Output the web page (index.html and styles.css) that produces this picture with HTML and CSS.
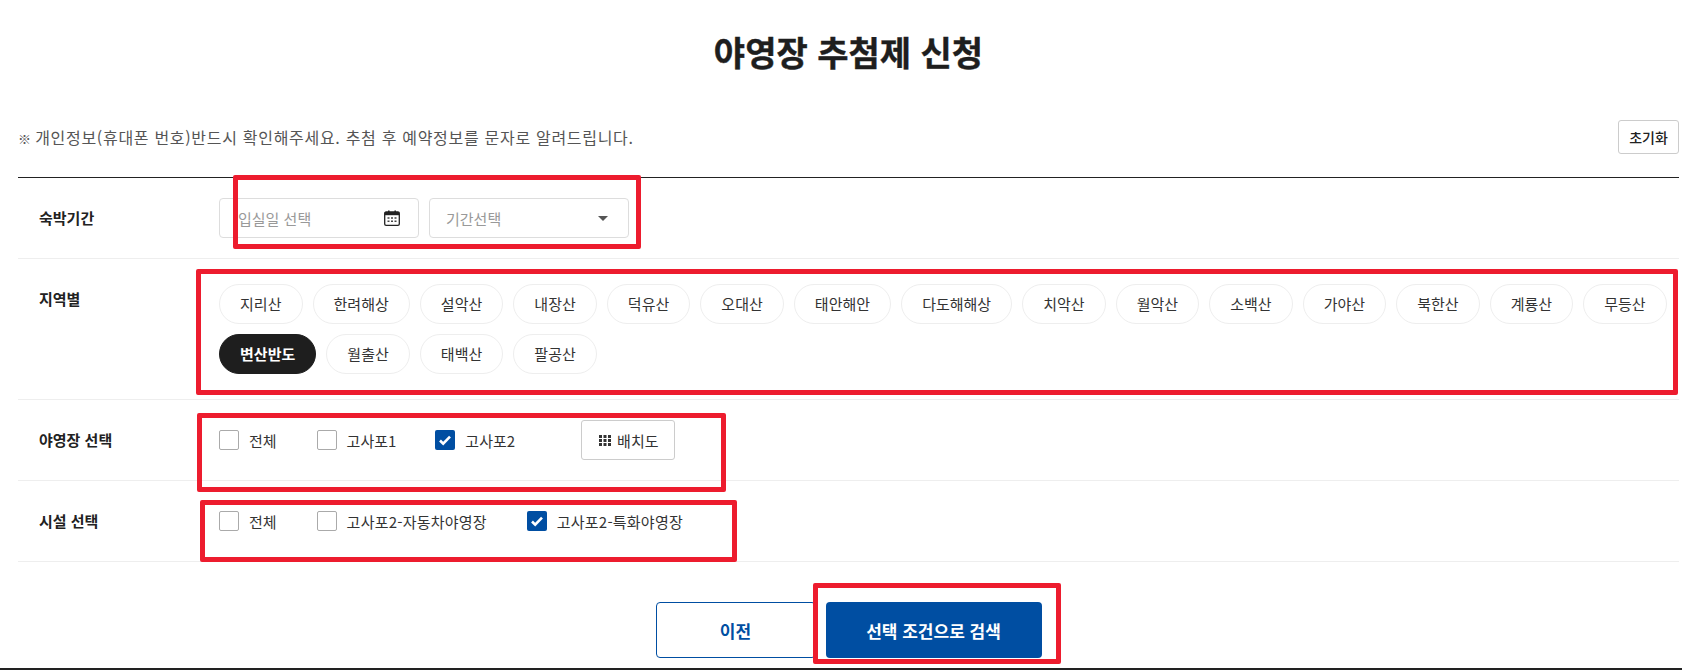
FILE: index.html
```html
<!DOCTYPE html>
<html lang="ko">
<head>
<meta charset="utf-8">
<title>야영장 추첨제 신청</title>
<link rel="stylesheet" href="styles.css">
</head>
<body>
<main class="page">
  <h1 class="title">야영장 추첨제 신청</h1>
  <div class="notice-bar">
    <p class="notice"><span class="refmark">※</span> 개인정보(휴대폰 번호)반드시 확인해주세요. 추첨 후 예약정보를 문자로 알려드립니다.</p>
    <button class="reset" type="button">초기화</button>
  </div>
  <section class="form">
    <div class="row">
      <div class="label">숙박기간</div>
      <div class="value inline">
        <div class="field">
          <span class="placeholder date-ph">입실일 선택</span>
          <svg class="cal" width="16" height="16" viewBox="0 0 16 16" aria-hidden="true">
            <path d="M4 0.5h1.6v2H4zM10.4 0.5H12v2h-1.6z" fill="#222"/>
            <rect x="0.7" y="2" width="14.6" height="13.3" rx="1.4" fill="none" stroke="#222" stroke-width="1.3"/>
            <rect x="0.7" y="2" width="14.6" height="3.2" fill="#222"/>
            <path d="M3.5 7.2h2v1.6h-2zM7 7.2h2v1.6h-2zM10.5 7.2h2v1.6h-2zM3.5 10.4h2V12h-2zM7 10.4h2V12H7zM10.5 10.4h2V12h-2z" fill="#444"/>
          </svg>
        </div>
        <div class="field select">
          <span class="placeholder">기간선택</span>
          <span class="caret"></span>
        </div>
      </div>
    </div>
    <div class="row">
      <div class="label">지역별</div>
      <div class="value chips">
        <span class="chip">지리산</span><span class="chip">한려해상</span><span class="chip">설악산</span><span class="chip">내장산</span><span class="chip">덕유산</span><span class="chip">오대산</span><span class="chip">태안해안</span><span class="chip">다도해해상</span><span class="chip">치악산</span><span class="chip">월악산</span><span class="chip">소백산</span><span class="chip">가야산</span><span class="chip">북한산</span><span class="chip">계룡산</span><span class="chip">무등산</span><span class="chip active">변산반도</span><span class="chip">월출산</span><span class="chip">태백산</span><span class="chip">팔공산</span>
      </div>
    </div>
    <div class="row">
      <div class="label">야영장 선택</div>
      <div class="value inline">
        <span class="check"><span class="box"></span>전체</span>
        <span class="check tight"><span class="box"></span>고사포1</span>
        <span class="check"><span class="box on"><svg width="20" height="20" viewBox="0 0 20 20" aria-hidden="true"><path d="M5 10.500l3.200 3.200 6.800-7" fill="none" stroke="#fff" stroke-width="2.600"/></svg></span>고사포2</span>
        <button class="map-btn" type="button">
          <svg width="12" height="11" viewBox="0 0 12 11" aria-hidden="true"><path d="M0 0h3v3H0zM4.500 0h3v3h-3zM9 0h3v3H9zM0 4h3v3H0zM4.500 4h3v3h-3zM9 4h3v3H9zM0 8h3v3H0zM4.500 8h3v3h-3zM9 8h3v3H9z" fill="#333"/></svg>
          배치도
        </button>
      </div>
    </div>
    <div class="row">
      <div class="label">시설 선택</div>
      <div class="value inline">
        <span class="check"><span class="box"></span>전체</span>
        <span class="check wide"><span class="box"></span>고사포2-자동차야영장</span>
        <span class="check wide"><span class="box on"><svg width="20" height="20" viewBox="0 0 20 20" aria-hidden="true"><path d="M5 10.500l3.200 3.200 6.800-7" fill="none" stroke="#fff" stroke-width="2.600"/></svg></span>고사포2-특화야영장</span>
      </div>
    </div>
  </section>
  <div class="actions">
    <button class="btn prev" type="button">이전</button>
    <button class="btn search" type="button">선택 조건으로 검색</button>
  </div>
</main>
<div class="mark mark-1"></div>
<div class="mark mark-2"></div>
<div class="mark mark-3"></div>
<div class="mark mark-4"></div>
<div class="mark mark-5"></div>
<div class="foot"></div>
</body>
</html>
```

FILE: styles.css
```css
* { box-sizing: border-box; }
html, body { margin: 0; padding: 0; height: 670px; overflow: hidden; background: #fff; }
body { position: relative; font-family: "Noto Sans CJK KR", "Noto Sans", sans-serif; color: #222; font-size: 15px; }
button { font-family: inherit; cursor: pointer; }
.page { margin: 0 3px 0 18px; }
.title { margin: 0; padding-top: 27px; height: 120px; font-size: 34px; line-height: 50px; font-weight: 700; text-align: center; color: #1e1e1e; -webkit-text-stroke: 0.4px #1e1e1e; }
.notice-bar { display: flex; justify-content: space-between; align-items: flex-start; height: 58px; border-bottom: 1px solid #222; }
.notice { margin: 0; font-size: 16px; letter-spacing: 0.7px; line-height: 34px; color: #555; }
.refmark { display: inline-block; width: 12px; overflow: visible; letter-spacing: 0; font-size: 13px; }
.reset { width: 61px; height: 34px; padding: 0; background: #fff; border: 1px solid #ccc; border-radius: 3px; font-size: 14px; font-weight: 500; color: #222; }
.row { display: grid; grid-template-columns: 201px 1fr; padding: 20px 0; border-bottom: 1px solid #eee; }
.label { padding-left: 21px; line-height: 40px; font-size: 15px; font-weight: 700; color: #222; }
.value { min-width: 0; }
.inline { display: flex; align-items: center; height: 40px; }
.field { position: relative; display: flex; align-items: center; justify-content: space-between; width: 200px; height: 40px; margin-right: 10px; padding: 0 19px; border: 1px solid #ddd; border-radius: 4px; background: #fff; }
.select { padding: 0 20px 0 16px; }
.placeholder { color: #999; }
.date-ph { margin-left: -1px; }
.cal { flex: none; margin-right: -1px; }
.caret { width: 0; height: 0; border-left: 5.5px solid transparent; border-right: 5.5px solid transparent; border-top: 5.5px solid #555; }
.chips { display: flex; flex-wrap: wrap; gap: 10px; padding: 5px 0; }
.chip { height: 40px; padding: 0 20.05px; line-height: 38px; border: 1px solid #eee; border-radius: 20px; color: #333; background: #fff; }
.chip.active { background: #1e1e1e; border-color: #1e1e1e; color: #fff; font-weight: 700; }
.check { display: inline-flex; align-items: center; margin-right: 40px; color: #333; }
.check.tight { margin-right: 39px; }
.check.wide { letter-spacing: 0.22px; }
.box { flex: none; width: 20px; height: 20px; margin-right: 10px; border: 1px solid #aaa; border-radius: 2px; background: #fff; }
.box svg { display: block; }
.box.on { border: 0; background: #004ea2; }
.map-btn { display: flex; align-items: center; gap: 6px; height: 40px; margin-left: 26px; padding: 0 16px 0 17px; background: #fff; border: 1px solid #ccc; border-radius: 3px; font-size: 15px; color: #333; }
.actions { display: flex; justify-content: center; gap: 10px; padding-top: 40px; }
.btn { height: 56px; border-radius: 4px; font-size: 17px; font-weight: 700; }
.prev { width: 160px; background: #fff; border: 1px solid #004ea2; color: #004ea2; }
.search { width: 216px; background: #004ea2; border: 0; color: #fff; }
.mark { position: absolute; border: 5px solid #ed1c2e; border-radius: 2px; pointer-events: none; }
.mark-1 { left: 233px; top: 175px; width: 408px; height: 74px; }
.mark-2 { left: 196px; top: 269px; width: 1482px; height: 126px; }
.mark-3 { left: 197px; top: 413px; width: 529px; height: 79px; }
.mark-4 { left: 200px; top: 500px; width: 537px; height: 62px; }
.mark-5 { left: 813px; top: 583px; width: 248px; height: 81px; }
.foot { position: absolute; left: 0; right: 0; top: 668px; height: 2px; background: #222; }
```
